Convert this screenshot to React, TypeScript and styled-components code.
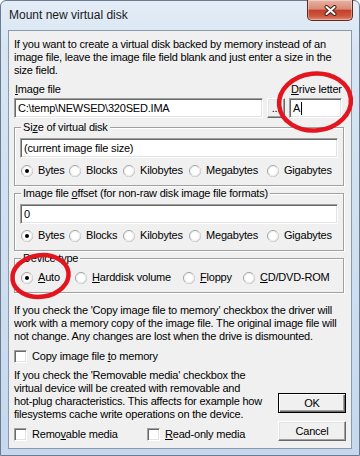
import styled, { createGlobalStyle } from "styled-components";

const GlobalStyle = createGlobalStyle`
  html, body {
    margin: 0;
    padding: 0;
    background: #ffffff;
  }
  body {
    font-family: "Liberation Sans", Arial, sans-serif;
  }
`;

const Stage = styled.div`
  position: relative;
  width: 360px;
  height: 456px;
  overflow: hidden;
`;

const Window = styled.div`
  width: 360px;
  height: 456px;
  box-sizing: border-box;
  display: flex;
  flex-direction: column;
  border: 1px solid #6b7c90;
  border-radius: 6px 6px 0 0;
  background: linear-gradient(180deg, #e4edf7 0%, #d7e5f3 10%, #cfdff0 55%, #c5d8ed 100%);
`;

const TitleBar = styled.div`
  height: 29px;
  flex-shrink: 0;
  display: flex;
  align-items: flex-start;
  justify-content: space-between;
  padding: 0 6px 0 8px;
`;

const Title = styled.div`
  font-size: 12px;
  line-height: 29px;
  color: #1a1a1a;
`;

const CloseButton = styled.div`
  width: 46px;
  height: 21px;
  margin-top: -1px;
  box-sizing: border-box;
  border: 1px solid #5c2a22;
  border-top: none;
  border-radius: 0 0 5px 5px;
  background: linear-gradient(180deg, #e9b3a5 0%, #d98a76 45%, #c3412a 52%, #cd573d 80%, #e08a70 100%);
  box-shadow: inset 0 0 0 1px rgba(255, 255, 255, 0.35);
  display: flex;
  align-items: center;
  justify-content: center;
`;

const Client = styled.div`
  flex: 1;
  margin: 0 7px 6px 7px;
  background: #f0f0f0;
  border: 1px solid #8a99ab;
  padding: 7px 7px 7px 5px;
  display: flex;
  flex-direction: column;
  font-size: 11px;
  line-height: 13px;
  letter-spacing: -0.2px;
  color: #000;
`;

const Para = styled.p<{ $top?: number }>`
  margin: ${p => p.$top ?? 0}px 0 0 0;
  white-space: nowrap;
`;

const U = styled.span`
  text-decoration: underline;
  text-underline-offset: 1px;
`;

const FileGrid = styled.div`
  margin-top: 6px;
  display: grid;
  grid-template-columns: 249px 18px 53px;
  column-gap: 4px;
  row-gap: 2px;
`;

const FieldLabel = styled.div<{ $col: number; $indent?: number }>`
  grid-column: ${p => p.$col};
  padding-left: ${p => p.$indent ?? 1}px;
  white-space: nowrap;
`;

const TextBox = styled.div<{ $col?: number }>`
  grid-column: ${p => p.$col ?? "auto"};
  height: 20px;
  box-sizing: border-box;
  background: #fff;
  border: 1px solid;
  border-color: #a0a0a0 #ffffff #ffffff #a0a0a0;
  box-shadow: inset 1px 1px 0 #696969, inset -1px -1px 0 #e3e3e3;
  padding: 0 3px;
  line-height: 18px;
  white-space: nowrap;
  overflow: hidden;
  display: flex;
  align-items: center;
`;

const Caret = styled.span`
  display: inline-block;
  width: 1px;
  height: 13px;
  background: #000;
  margin-left: 1px;
`;

const ClassicButton = styled.div<{ $default?: boolean; $col?: number }>`
  grid-column: ${p => p.$col ?? "auto"};
  box-sizing: border-box;
  background: #f0f0f0;
  border: 1px solid;
  border-color: ${p => (p.$default ? "#000" : "#fff #696969 #696969 #fff")};
  box-shadow: ${p =>
    p.$default
      ? "inset 1px 1px 0 #fff, inset -1px -1px 0 #696969, inset -2px -2px 0 #a0a0a0"
      : "inset -1px -1px 0 #a0a0a0, inset 1px 1px 0 #e3e3e3"};
  display: flex;
  align-items: center;
  justify-content: center;
  height: 20px;
`;

const Browse = styled(ClassicButton)`
  align-items: flex-end;
  line-height: 13px;
  padding-bottom: 2px;
`;

const Group = styled.div<{ $top: number }>`
  margin-top: ${p => p.$top}px;
  border: 1px solid #a0a0a0;
  box-shadow: inset 1px 1px 0 #fff, 1px 1px 0 #fff;
  padding: 0 5px 8px 5px;
  display: flex;
  flex-direction: column;
`;

const Legend = styled.div`
  align-self: flex-start;
  margin: -7px 0 0 1px;
  padding: 0 2px;
  background: #f0f0f0;
  white-space: nowrap;
`;

const GroupInput = styled(TextBox)`
  margin-top: 4px;
`;

const OptionRow = styled.div<{ $top: number }>`
  margin-top: ${p => p.$top}px;
  padding-left: 1px;
  display: flex;
  height: 13px;
`;

const Option = styled.div<{ $w?: number }>`
  width: ${p => (p.$w ? `${p.$w}px` : "auto")};
  flex-shrink: 0;
  display: flex;
  align-items: center;
  white-space: pre;
`;

const RadioMark = styled.svg`
  width: 12px;
  height: 12px;
  margin-right: 5px;
  flex-shrink: 0;
`;

const CheckBox = styled.div`
  width: 13px;
  height: 13px;
  box-sizing: border-box;
  margin-right: 5px;
  flex-shrink: 0;
  background: #fff;
  border: 1px solid;
  border-color: #a0a0a0 #ffffff #ffffff #a0a0a0;
  box-shadow: inset 1px 1px 0 #696969, inset -1px -1px 0 #e3e3e3;
`;

const CheckRow = styled.div<{ $top: number }>`
  margin-top: ${p => p.$top}px;
  height: 13px;
  display: flex;
`;

const Bottom = styled.div`
  margin-top: 6px;
  display: flex;
  justify-content: space-between;
`;

const BottomLeft = styled.div`
  display: flex;
  flex-direction: column;
`;

const ButtonColumn = styled.div`
  align-self: flex-end;
  margin-right: -2px;
  display: flex;
  flex-direction: column;
  gap: 8px;
`;

const DialogButton = styled(ClassicButton)`
  width: 68px;
`;

const Annotations = styled.svg`
  position: absolute;
  left: 0;
  top: 0;
  width: 360px;
  height: 456px;
  pointer-events: none;
`;

const Radio = ({ checked }: { checked?: boolean }) => (
  <RadioMark viewBox="0 0 12 12">
    <circle cx="6" cy="6" r="5.5" fill="#fff" stroke="#a0a0a0" />
    <path d="M2.2 9.8 A5.4 5.4 0 0 0 9.8 2.2" fill="none" stroke="#f4f4f4" strokeWidth="1" />
    <circle cx="6" cy="6" r="4.4" fill="none" stroke="#e8e8e8" strokeWidth="0.8" />
    {checked && <circle cx="6" cy="6" r="2" fill="#000" />}
  </RadioMark>
);

const sizeUnits = [
  { label: "Bytes", w: 48 },
  { label: "Blocks", w: 54 },
  { label: "Kilobytes", w: 66 },
  { label: "Megabytes", w: 78 },
  { label: "Gigabytes" },
];

const UnitRow = ({ top }: { top: number }) => (
  <OptionRow $top={top}>
    {sizeUnits.map((u, i) => (
      <Option key={u.label} $w={u.w}>
        <Radio checked={i === 0} />
        {u.label}
      </Option>
    ))}
  </OptionRow>
);

export default function App() {
  return (
    <Stage>
      <GlobalStyle />
      <Window>
        <TitleBar>
          <Title>Mount new virtual disk</Title>
          <CloseButton>
            <svg width="13" height="11" viewBox="0 0 13 11">
              <path d="M2.5 2 L10.5 9 M10.5 2 L2.5 9" stroke="#4a2018" strokeWidth="4" strokeLinecap="round" />
              <path d="M2.5 2 L10.5 9 M10.5 2 L2.5 9" stroke="#ffffff" strokeWidth="2" strokeLinecap="round" />
            </svg>
          </CloseButton>
        </TitleBar>
        <Client>
          <Para>
            If you want to create a virtual disk backed by memory instead of an
            <br />
            image file, leave the image file field blank and just enter a size in the
            <br />
            size field.
          </Para>

          <FileGrid>
            <FieldLabel $col={1}>
              <U>I</U>mage file
            </FieldLabel>
            <FieldLabel $col={3} $indent={2}>
              <U>D</U>rive letter
            </FieldLabel>
            <TextBox $col={1}>C:\temp\NEWSED\320SED.IMA</TextBox>
            <Browse $col={2}>...</Browse>
            <TextBox $col={3}>
              A<Caret />
            </TextBox>
          </FileGrid>

          <Group $top={9}>
            <Legend>
              Si<U>z</U>e of virtual disk
            </Legend>
            <GroupInput>(current image file size)</GroupInput>
            <UnitRow top={6} />
          </Group>

          <Group $top={7}>
            <Legend>
              Image file <U>o</U>ffset (for non-raw disk image file formats)
            </Legend>
            <GroupInput>0</GroupInput>
            <UnitRow top={5} />
          </Group>

          <Group $top={7}>
            <Legend>Device type</Legend>
            <OptionRow $top={6}>
              <Option $w={54}>
                <Radio checked />
                <U>A</U>uto
              </Option>
              <Option $w={108}>
                <Radio />
                <U>H</U>arddisk volume
              </Option>
              <Option $w={60}>
                <Radio />
                <U>F</U>loppy
              </Option>
              <Option>
                <Radio />
                <U>C</U>D/DVD-ROM
              </Option>
            </OptionRow>
          </Group>

          <Para $top={11}>
            If you check the 'Copy image file to memory' checkbox the driver will
            <br />
            work with a memory copy of the image file. The original image file will
            <br />
            not change. Any changes are lost when the drive is dismounted.
          </Para>

          <CheckRow $top={7}>
            <Option>
              <CheckBox />
              {"Copy image file "}
              <U>t</U>o memory
            </Option>
          </CheckRow>

          <Bottom>
            <BottomLeft>
              <Para>
                If you check the 'Removable media' checkbox the
                <br />
                virtual device will be created with removable and
                <br />
                hot-plug characteristics. This affects for example how
                <br />
                filesystems cache write operations on the device.
              </Para>
              <CheckRow $top={7}>
                <Option $w={133}>
                  <CheckBox />
                  Remo<U>v</U>able media
                </Option>
                <Option>
                  <CheckBox />
                  <U>R</U>ead-only media
                </Option>
              </CheckRow>
            </BottomLeft>
            <ButtonColumn>
              <DialogButton $default>OK</DialogButton>
              <DialogButton>Cancel</DialogButton>
            </ButtonColumn>
          </Bottom>
        </Client>
      </Window>
      <Annotations viewBox="0 0 360 456">
        <ellipse cx="315" cy="102" rx="36" ry="28.5" fill="none" stroke="#e3161f" strokeWidth="4.5" transform="rotate(-6 315 102)" />
        <ellipse cx="40.5" cy="276" rx="28.2" ry="20.8" fill="none" stroke="#e3161f" strokeWidth="4.5" transform="rotate(-8 40.5 276)" />
      </Annotations>
    </Stage>
  );
}
